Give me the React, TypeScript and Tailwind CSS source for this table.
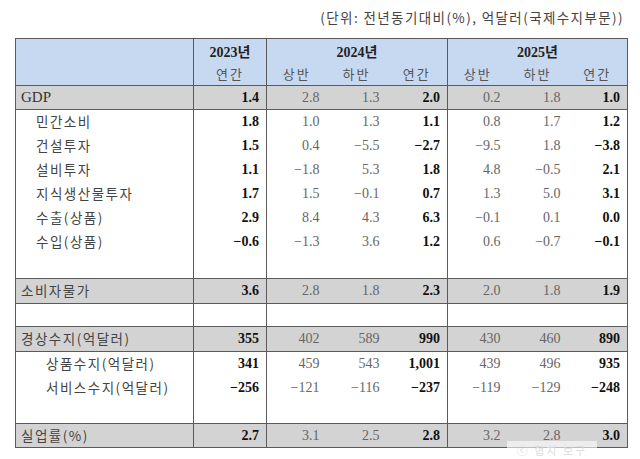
import React from 'react';

type Row = {
  label: string;
  indent?: 0 | 1 | 2;
  shaded?: boolean;
  vals?: string[];
  h?: string;
};

const rows: Row[] = [
  { label: 'GDP', shaded: true, vals: ['1.4', '2.8', '1.3', '2.0', '0.2', '1.8', '1.0'] },
  { label: '민간소비', indent: 1, vals: ['1.8', '1.0', '1.3', '1.1', '0.8', '1.7', '1.2'] },
  { label: '건설투자', indent: 1, vals: ['1.5', '0.4', '−5.5', '−2.7', '−9.5', '1.8', '−3.8'] },
  { label: '설비투자', indent: 1, vals: ['1.1', '−1.8', '5.3', '1.8', '4.8', '−0.5', '2.1'] },
  { label: '지식생산물투자', indent: 1, vals: ['1.7', '1.5', '−0.1', '0.7', '1.3', '5.0', '3.1'] },
  { label: '수출(상품)', indent: 1, vals: ['2.9', '8.4', '4.3', '6.3', '−0.1', '0.1', '0.0'] },
  { label: '수입(상품)', indent: 1, vals: ['−0.6', '−1.3', '3.6', '1.2', '0.6', '−0.7', '−0.1'] },
  { label: '', h: 'h-[25px]' },
  { label: '소비자물가', shaded: true, h: 'h-[25px]', vals: ['3.6', '2.8', '1.8', '2.3', '2.0', '1.8', '1.9'] },
  { label: '', h: 'h-[23px]' },
  { label: '경상수지(억달러)', shaded: true, h: 'h-[25px]', vals: ['355', '402', '589', '990', '430', '460', '890'] },
  { label: '상품수지(억달러)', indent: 2, vals: ['341', '459', '543', '1,001', '439', '496', '935'] },
  { label: '서비스수지(억달러)', indent: 2, vals: ['−256', '−121', '−116', '−237', '−119', '−129', '−248'] },
  { label: '', h: 'h-[24px]' },
  { label: '실업률(%)', shaded: true, vals: ['2.7', '3.1', '2.5', '2.8', '3.2', '2.8', '3.0'] },
];

const bold = [true, false, false, true, false, false, true];
const serif = { fontFamily: '"Liberation Serif", "Noto Sans CJK KR", serif' };
const kr = { fontFamily: '"Noto Sans CJK KR", "Noto Sans", sans-serif' };

export default function App() {
  return (
    <div className="w-[640px] h-[459px] bg-white relative overflow-hidden">
      <div className="h-[38px] flex items-center justify-end pr-[16px] pb-[4px]">
        <span className="text-[13.5px] tracking-[1.4px] text-[#444]" style={kr}>
          (단위: 전년동기대비(%), 억달러(국제수지부문))
        </span>
      </div>
      <div className="pl-[15px]">
        <table className="table-fixed border-collapse w-[612px] border border-[#5a5a5a]">
          <colgroup>
            <col className="w-[178px]" />
            <col className="w-[73px]" />
            <col className="w-[60px]" />
            <col className="w-[60px]" />
            <col className="w-[61px]" />
            <col className="w-[60px]" />
            <col className="w-[60px]" />
            <col className="w-[60px]" />
          </colgroup>
          <thead className="bg-[#c6d9f1]">
            <tr className="h-[23px]">
              <th rowSpan={2} className="border-r border-b border-[#5a5a5a]" />
              <th className="border-r border-[#5a5a5a] text-[14px] font-bold text-[#222] pt-[3px]" style={serif}>2023년</th>
              <th colSpan={3} className="border-r border-[#5a5a5a] text-[14px] font-bold text-[#222] pt-[3px]" style={serif}>2024년</th>
              <th colSpan={3} className="text-[14px] font-bold text-[#222] pt-[3px]" style={serif}>2025년</th>
            </tr>
            <tr className="h-[22px] text-[13px] font-normal text-[#555]" style={kr}>
              <th className="font-normal border-r border-b border-[#5a5a5a] tracking-[2px]">연간</th>
              <th className="font-normal border-b border-[#5a5a5a] tracking-[2px]">상반</th>
              <th className="font-normal border-b border-[#5a5a5a] tracking-[2px]">하반</th>
              <th className="font-normal border-r border-b border-[#5a5a5a] tracking-[2px]">연간</th>
              <th className="font-normal border-b border-[#5a5a5a] tracking-[2px]">상반</th>
              <th className="font-normal border-b border-[#5a5a5a] tracking-[2px]">하반</th>
              <th className="font-normal border-b border-[#5a5a5a] tracking-[2px]">연간</th>
            </tr>
          </thead>
          <tbody>
            {rows.map((r, i) => (
              <tr
                key={i}
                className={`${r.h ?? 'h-[24px]'} ${r.shaded ? 'bg-[#d3d3d3] border-y border-[#5a5a5a]' : ''}`}
              >
                <td
                  className={`border-r border-[#5a5a5a] whitespace-nowrap ${
                    r.label === 'GDP' ? 'text-[15px] text-[#333]' : 'text-[13.5px] tracking-[1.5px] text-[#444]'
                  } ${r.indent === 1 ? 'pl-[20px]' : r.indent === 2 ? 'pl-[30px]' : 'pl-[5px]'}`}
                  style={r.label === 'GDP' ? serif : kr}
                >
                  {r.label}
                </td>
                {Array.from({ length: 7 }).map((_, j) => (
                  <td
                    key={j}
                    className={`text-right text-[14px] pr-[7px] ${j === 0 || j === 3 ? 'border-r border-[#5a5a5a]' : ''} ${
                      bold[j] ? 'font-bold text-[#111]' : 'text-[#666]'
                    }`}
                    style={serif}
                  >
                    {r.vals ? r.vals[j] : ''}
                  </td>
                ))}
              </tr>
            ))}
          </tbody>
        </table>
      </div>
      <div className="absolute left-[507px] top-[441px] w-[90px] h-[18px] bg-white/60 flex items-center justify-center">
        <span className="text-[11px] text-[#ddd] tracking-[2px]" style={kr}>ⓒ 협치 보구</span>
      </div>
    </div>
  );
}
